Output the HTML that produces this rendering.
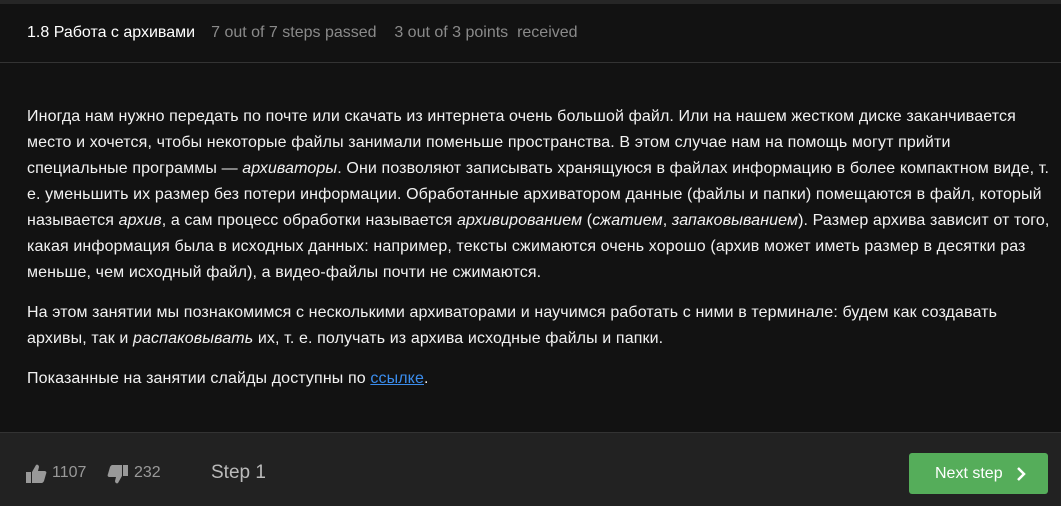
<!DOCTYPE html>
<html><head><meta charset="utf-8"><style>
*{margin:0;padding:0;box-sizing:border-box}
body{width:1061px;height:506px;background:#121212;font-family:"Liberation Sans",Arial,sans-serif;overflow:hidden;position:relative;color:#fff}
.top{position:absolute;left:0;top:0;width:1061px;height:4px;background:#262626}
.hdr{position:absolute;left:0;top:4px;width:1061px;height:59px;border-bottom:1px solid #333;font-size:16px;line-height:57px;padding-left:27px;white-space:nowrap}
.hdr b{font-weight:normal;color:#fff;margin-right:16px}
.hdr span{color:#8a8a8a}
.txt{position:absolute;left:27px;top:104px;font-size:16px;letter-spacing:0.12px;line-height:26px;color:#f2f2f2;white-space:nowrap}
.txt p{margin-bottom:14px}
a{color:#3b8ded;text-decoration:underline}
.ftr{position:absolute;left:0;top:432px;width:1061px;height:74px;background:#222;border-top:1px solid #333}
.fi{position:absolute;top:463px;color:#999;font-size:16px;line-height:20px}
.btn{position:absolute;left:909px;top:453px;width:139px;height:41px;background:#55ad5a;border-radius:3px;color:#fff;font-size:16px;line-height:41px;padding-left:26px}
</style></head><body>
<div class="top"></div>
<div class="hdr"><b>1.8 Работа с архивами</b><span>7 out of 7 steps passed&nbsp;&nbsp;&nbsp; 3 out of 3 points&nbsp; received</span></div>
<div class="txt">
<p>Иногда нам нужно передать по почте или скачать из интернета очень большой файл. Или на нашем жестком диске заканчивается<br>место и хочется, чтобы некоторые файлы занимали поменьше пространства. В этом случае нам на помощь могут прийти<br>специальные программы — <i>архиваторы</i>. Они позволяют записывать хранящуюся в файлах информацию в более компактном виде, т.<br>е. уменьшить их размер без потери информации. Обработанные архиватором данные (файлы и папки) помещаются в файл, который<br>называется <i>архив</i>, а сам процесс обработки называется <i>архивированием</i> (<i>сжатием</i>, <i>запаковыванием</i>). Размер архива зависит от того,<br>какая информация была в исходных данных: например, тексты сжимаются очень хорошо (архив может иметь размер в десятки раз<br>меньше, чем исходный файл), а видео-файлы почти не сжимаются.</p>
<p>На этом занятии мы познакомимся с несколькими архиваторами и научимся работать с ними в терминале: будем как создавать<br>архивы, так и <i>распаковывать</i> их, т. е. получать из архива исходные файлы и папки.</p>
<p>Показанные на занятии слайды доступны по <a>ссылке</a>.</p>
</div>
<div class="ftr"></div>
<svg style="position:absolute;left:26px;top:463px" width="21" height="21" viewBox="0 0 21 21"><path fill="#999" d="M0 9h5v11H0z M6 9l4-7c1-1 3 0 3 2l-1 4h6c2 0 3 1 2 3l-2 7c-1 2-2 2-3 2H6z"/></svg>
<div class="fi" style="left:52px">1107</div>
<svg style="position:absolute;left:107px;top:465px" width="21" height="21" viewBox="0 0 21 21"><path fill="#999" d="M16 0h5v11h-5z M15 11l-4 7c-1 1-3 0-3-2l1-4H3c-2 0-3-1-2-3l2-7c1-2 2-2 3-2h9z"/></svg>
<div class="fi" style="left:134px">232</div>
<div class="fi" style="left:211px;color:#bbb;font-size:19px;top:463px">Step 1</div>
<div class="btn">Next step<svg style="position:absolute;left:107px;top:14px" width="10" height="14" viewBox="0 0 10 14"><path d="M2 1l6 6-6 6" stroke="#fff" stroke-width="2.5" fill="none"/></svg></div>
</body></html>
